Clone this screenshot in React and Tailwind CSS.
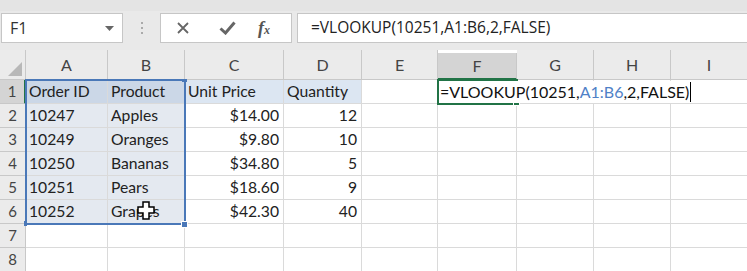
import React from 'react'

const cols = ['A', 'B', 'C', 'D', 'E', 'F', 'G', 'H', 'I']

const data = [
  ['Order ID', 'Product', 'Unit Price', 'Quantity'],
  ['10247', 'Apples', '$14.00', '12'],
  ['10249', 'Oranges', '$9.80', '10'],
  ['10250', 'Bananas', '$34.80', '5'],
  ['10251', 'Pears', '$18.60', '9'],
  ['10252', 'Grapes', '$42.30', '40'],
  ['', '', '', ''],
  ['', '', '', ''],
]

const cellFont = { fontFamily: 'Lato, "Open Sans", sans-serif' }

const cellBg = (r, c) => {
  if (r === 0 && c < 2) return 'bg-[#cbd7e7]'
  if (r === 0 && c < 4) return 'bg-[#dce6f2]'
  if (r < 6 && c < 2) return 'bg-[#e4e9f0]'
  return 'bg-white'
}

const Formula = () => (
  <>
    =VLOOKUP(10251,<span className="text-[#4f81c7]">A1:B6</span>,2,FALSE)
  </>
)

export default function App() {
  return (
    <div className="w-[747px] h-[271px] overflow-hidden bg-[#e9e9e9] text-[#222]" style={cellFont}>
      {/* formula bar */}
      <div className="h-[50px] border-t-[11px] border-[#e4e4e4] flex items-start pt-[2px]">
        <div className="ml-[1px] w-[122px] h-[30px] bg-white border border-[#c6c6c6] flex items-center justify-between pl-[8px] pr-[8px]">
          <span className="text-[16px] text-[#333]" style={{ fontFamily: '"Open Sans", sans-serif' }}>F1</span>
          <svg width="9" height="5" viewBox="0 0 9 5"><path d="M0 0h9L4.5 5z" fill="#666" /></svg>
        </div>
        <div className="w-[37px] h-[30px] flex flex-col items-center justify-center gap-[3px]">
          <span className="w-[2px] h-[2px] bg-[#aaa]" />
          <span className="w-[2px] h-[2px] bg-[#aaa]" />
          <span className="w-[2px] h-[2px] bg-[#aaa]" />
        </div>
        <div className="w-[132px] h-[30px] bg-white border border-[#c6c6c6] flex items-center">
          <svg className="ml-[16px]" width="12" height="12" viewBox="0 0 12 12"><path d="M1 1l10 10M11 1L1 11" stroke="#666" strokeWidth="1.8" /></svg>
          <svg className="ml-[30px]" width="17" height="14" viewBox="0 0 17 14"><path d="M1.5 7.5l5 4.5L15.5 1.5" stroke="#666" strokeWidth="3" fill="none" /></svg>
          <span className="ml-[22px] text-[#555] italic text-[18px] font-bold leading-none" style={{ fontFamily: '"Liberation Serif", serif' }}>f<span className="text-[12px]">x</span></span>
        </div>
        <div className="ml-[5px] flex-1 h-[30px] bg-white border border-[#c6c6c6] border-r-0 flex items-center pl-[13px] text-[15.5px] text-[#222]" style={{ fontFamily: '"Open Sans", sans-serif' }}>
          =VLOOKUP(10251,A1:B6,2,FALSE)
        </div>
      </div>

      {/* sheet */}
      <div className="relative grid grid-cols-[26px_82px_77px_99px_78px_76px_79px_77px_77px_77px] grid-rows-[30px_repeat(8,24px)] bg-white">
        <div className="bg-[#ebebeb] border-r border-b border-[#c8c8c8] relative">
          <svg className="absolute right-[3px] bottom-[3px]" width="14" height="14" viewBox="0 0 14 14"><path d="M14 0v14H0z" fill="#b8b8b8" /></svg>
        </div>
        {cols.map((c) => (
          <div
            key={c}
            className={`flex items-center justify-center text-[16px] text-[#444] border-r border-[#c8c8c8] ${c === 'F' ? 'bg-[#d4d4d4] border-b-2 border-b-[#217346] mt-[3px]' : 'bg-[#ebebeb] border-b border-b-[#c8c8c8]'}`}
          >
            {c}
          </div>
        ))}
        {data.map((row, r) => (
          <React.Fragment key={r}>
            <div className={`flex items-center justify-center text-[15px] text-[#444] border-b border-[#c8c8c8] ${r === 0 ? 'bg-[#d4d4d4] border-r-2 border-r-[#217346]' : 'bg-[#ebebeb] border-r border-r-[#c8c8c8]'}`}>
              {r + 1}
            </div>
            {cols.map((c, ci) => {
              const v = ci < 4 ? row[ci] : ''
              const right = r > 0 && (ci === 2 || ci === 3)
              return (
                <div
                  key={c}
                  className={`flex items-center text-[15.7px] whitespace-nowrap border-r border-b border-[#dadada] ${cellBg(r, ci)} ${right ? 'justify-end pr-[4px]' : 'pl-[3px]'}`}
                >
                  {v}
                </div>
              )
            })}
          </React.Fragment>
        ))}

        {/* selection A1:B6 */}
        <div className="absolute left-[25px] top-[29px] w-[161px] h-[146px] border-2 border-[#4a78b8] pointer-events-none" />
        <div className="absolute left-[182px] top-[29px] w-[5px] h-[3px] bg-[#4a78b8]" />
        <div className="absolute left-[181px] top-[171px] w-[7px] h-[7px] bg-[#4a78b8] border border-white" />
        <div className="absolute left-[24px] top-[171px] w-[3px] h-[5px] bg-[#4a78b8]" />

        {/* active cell F1 with edit text */}
        <div className="absolute left-[437px] top-[29px] w-[81px] h-[26px] border-2 border-[#217346]" />
        <div className="absolute left-[513px] top-[51px] w-[7px] h-[5px] bg-[#217346] border border-white" />
        <div className="absolute left-[440px] top-[31px] h-[22px] flex items-center bg-white pr-[1px] text-[16px] text-[#111] whitespace-nowrap">
          <Formula />
          <span className="ml-[1px] w-[1px] h-[20px] bg-black" />
        </div>

        {/* mouse cursor */}
        <svg className="absolute left-[137px] top-[151px]" width="18" height="19" viewBox="0 0 18 19">
          <path d="M6 1h6v5h5v6h-5v6H6v-6H1V6h5z" fill="#fff" stroke="#000" strokeWidth="1.5" />
        </svg>
      </div>
    </div>
  )
}
